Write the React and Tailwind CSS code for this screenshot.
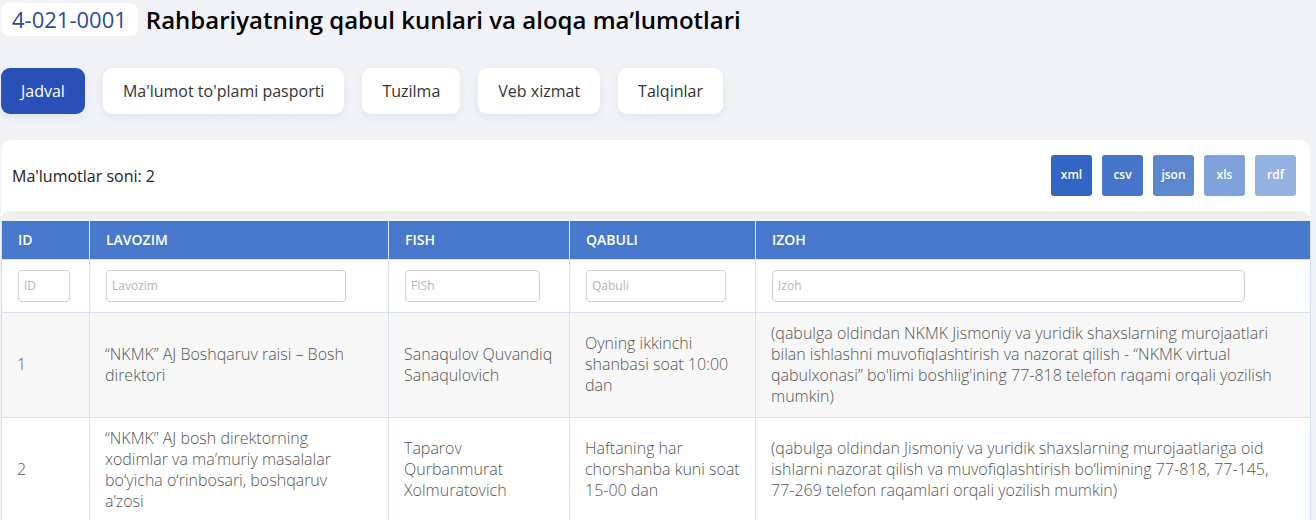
import React from "react";

const font = { fontFamily: '"Open Sans", "Noto Sans", sans-serif' };

const tabs = ["Jadval", "Ma'lumot to'plami pasporti", "Tuzilma", "Veb xizmat", "Talqinlar"];

const exportsBtns = [
  { t: "xml", c: "bg-[#3166c6]" },
  { t: "csv", c: "bg-[#4576cb]" },
  { t: "json", c: "bg-[#5b87d0]" },
  { t: "xls", c: "bg-[#7fa1db]" },
  { t: "rdf", c: "bg-[#93b1e1]" },
];

const rows = [
  {
    id: "1",
    lav: "“NKMK” AJ Boshqaruv raisi – Bosh direktori",
    fish: "Sanaqulov Quvandiq Sanaqulovich",
    qab: "Oyning ikkinchi shanbasi soat 10:00 dan",
    izoh: "(qabulga oldindan NKMK Jismoniy va yuridik shaxslarning murojaatlari bilan ishlashni muvofiqlashtirish va nazorat qilish - “NKMK virtual qabulxonasi” bo'limi boshlig'ining 77-818 telefon raqami orqali yozilish mumkin)",
    bg: "bg-[#f7f7f7]",
  },
  {
    id: "2",
    lav: "“NKMK” AJ bosh direktorning xodimlar va maʼmuriy masalalar boʻyicha oʻrinbosari, boshqaruv aʼzosi",
    fish: "Taparov Qurbanmurat Xolmuratovich",
    qab: "Haftaning har chorshanba kuni soat 15-00 dan",
    izoh: "(qabulga oldindan Jismoniy va yuridik shaxslarning murojaatlariga oid ishlarni nazorat qilish va muvofiqlashtirish boʻlimining 77-818, 77-145, 77-269 telefon raqamlari orqali yozilish mumkin)",
    bg: "bg-white",
  },
];

const cols = [
  { h: "ID", w: "w-[88px]", inp: "w-[52px]", ph: "ID", pr: "pr-[15px]" },
  { h: "LAVOZIM", w: "w-[299px]", inp: "w-[240px]", ph: "Lavozim", pr: "pr-[32px]" },
  { h: "FISH", w: "w-[181px]", inp: "w-[135px]", ph: "FISh", pr: "pr-[12px]" },
  { h: "QABULI", w: "w-[186px]", inp: "w-[140px]", ph: "Qabuli", pr: "pr-[12px]" },
  { h: "IZOH", w: "w-[555px]", inp: "w-[473px]", ph: "Izoh", pr: "pr-[15px]" },
];

export default function App() {
  return (
    <div style={font} className="w-[1316px] h-[520px] overflow-hidden bg-[#f0f2f7]">
      <div className="flex items-center pt-[3px] pl-[1px] gap-[8px]">
        <div className="h-[33px] px-[11px] bg-white rounded-[8px] flex items-center text-[22px] text-[#2a4b9c]">
          4-021-0001
        </div>
        <h1 className="text-[24px] font-semibold text-black leading-none">
          Rahbariyatning qabul kunlari va aloqa maʼlumotlari
        </h1>
      </div>

      <div className="flex gap-[18px] mt-[32px] pl-[1px]">
        {tabs.map((t, i) => (
          <div
            key={t}
            className={
              "h-[46px] px-[20px] rounded-[9px] flex items-center text-[16px] shadow-[0_3px_8px_rgba(40,60,110,0.08)] " +
              (i === 0 ? "bg-[#2850b8] text-white" : "bg-white text-[#333]")
            }
          >
            {t}
          </div>
        ))}
      </div>

      <div className="mt-[26px] ml-[1px] w-[1309px] bg-white rounded-t-[10px]">
        <div className="h-[71px] flex items-center justify-between pl-[11px] pr-[14px]">
          <div className="text-[16px] text-[#222]">Ma'lumotlar soni: 2</div>
          <div className="flex gap-[10px] mt-[-1px]">
            {exportsBtns.map((b) => (
              <div
                key={b.t}
                className={"w-[41px] h-[41px] rounded-[3px] flex items-center justify-center text-white text-[12px] font-semibold " + b.c}
              >
                {b.t}
              </div>
            ))}
          </div>
        </div>
        <div className="bg-[#f0f0f0] rounded-t-[8px] pt-[10px]">
          <table className="border-collapse table-fixed w-[1309px]">
            <thead>
              <tr className="bg-[#4878cb] h-[38px]">
                {cols.map((c) => (
                  <th
                    key={c.h}
                    className={"text-left text-white text-[14px] font-semibold pl-[16px] pr-[15px] border-x border-[#dfe6f3] " + c.w}
                  >
                    {c.h}
                  </th>
                ))}
              </tr>
            </thead>
            <tbody>
              <tr className="bg-white h-[53px]">
                {cols.map((c) => (
                  <td key={c.h} className="pl-[16px] pr-[10px] border border-[#d7e0ee]">
                    <input
                      placeholder={c.ph}
                      className={"h-[32px] border border-[#cfcfcf] rounded-[4px] px-[5px] text-[12px] placeholder-[#b4b4b4] outline-none " + c.inp}
                      style={font}
                    />
                  </td>
                ))}
              </tr>
              {rows.map((r) => (
                <tr key={r.id} className={r.bg + " text-[16px] leading-[21px] text-[#555] font-light"}>
                  {[r.id, r.lav, r.fish, r.qab, r.izoh].map((v, i) => (
                    <td key={i} className={"pl-[15px] py-[10px] border border-[#d7e0ee] align-middle " + cols[i].pr}>
                      {v}
                    </td>
                  ))}
                </tr>
              ))}
            </tbody>
          </table>
        </div>
      </div>
    </div>
  );
}
